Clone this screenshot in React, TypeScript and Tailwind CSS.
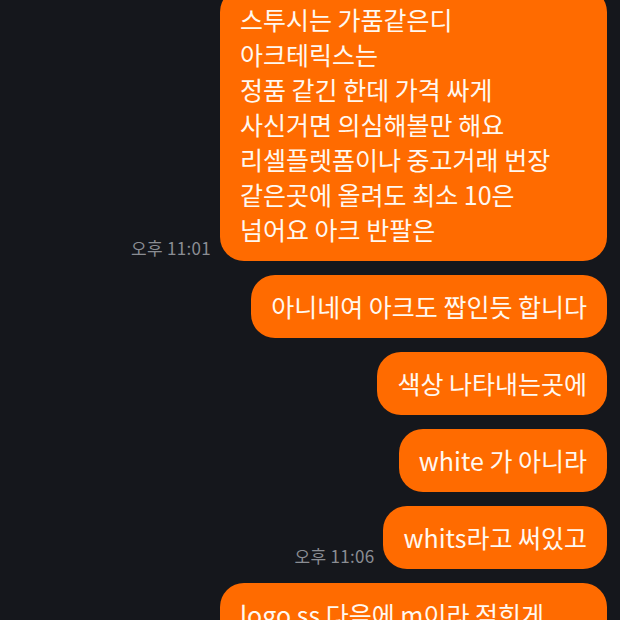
const font = { fontFamily: '"Noto Sans CJK KR", "Noto Sans", sans-serif' };

type Msg = { text: string; time?: string; wide?: boolean };

const messages: Msg[] = [
  {
    text: "스투시는 가품같은디\n아크테릭스는\n정품 같긴 한데 가격 싸게\n사신거면 의심해볼만 해요\n리셀플렛폼이나 중고거래 번장\n같은곳에 올려도 최소 10은\n넘어요 아크 반팔은",
    time: "오후 11:01",
    wide: true,
  },
  { text: "아니네여 아크도 짭인듯 합니다" },
  { text: "색상 나타내는곳에" },
  { text: "white 가 아니라" },
  { text: "whits라고 써있고", time: "오후 11:06" },
  { text: "logo ss 다음에 m이라 적힌게\n보이네요", wide: true },
];

function Bubble({ msg }: { msg: Msg }) {
  return (
    <div className="flex items-end gap-[9px]">
      {msg.time && (
        <span className="mb-[3px] text-[17px] leading-5 tracking-[0.3px] text-[#8a8d93]">
          {msg.time}
        </span>
      )}
      <div
        className={
          "whitespace-pre-line rounded-[24px] bg-[#ff6b00] px-[20px] py-[14px] text-[25px] leading-[35px] text-[#fff8f0] " +
          (msg.wide ? "w-[387px]" : "")
        }
      >
        {msg.text}
      </div>
    </div>
  );
}

export default function App() {
  return (
    <div
      className="h-[620px] w-[620px] overflow-hidden bg-[#15171c]"
      style={font}
    >
      <div className="-mt-[12px] flex flex-col items-end gap-[14px] pr-[13px]">
        {messages.map((m, i) => (
          <Bubble key={i} msg={m} />
        ))}
      </div>
    </div>
  );
}
